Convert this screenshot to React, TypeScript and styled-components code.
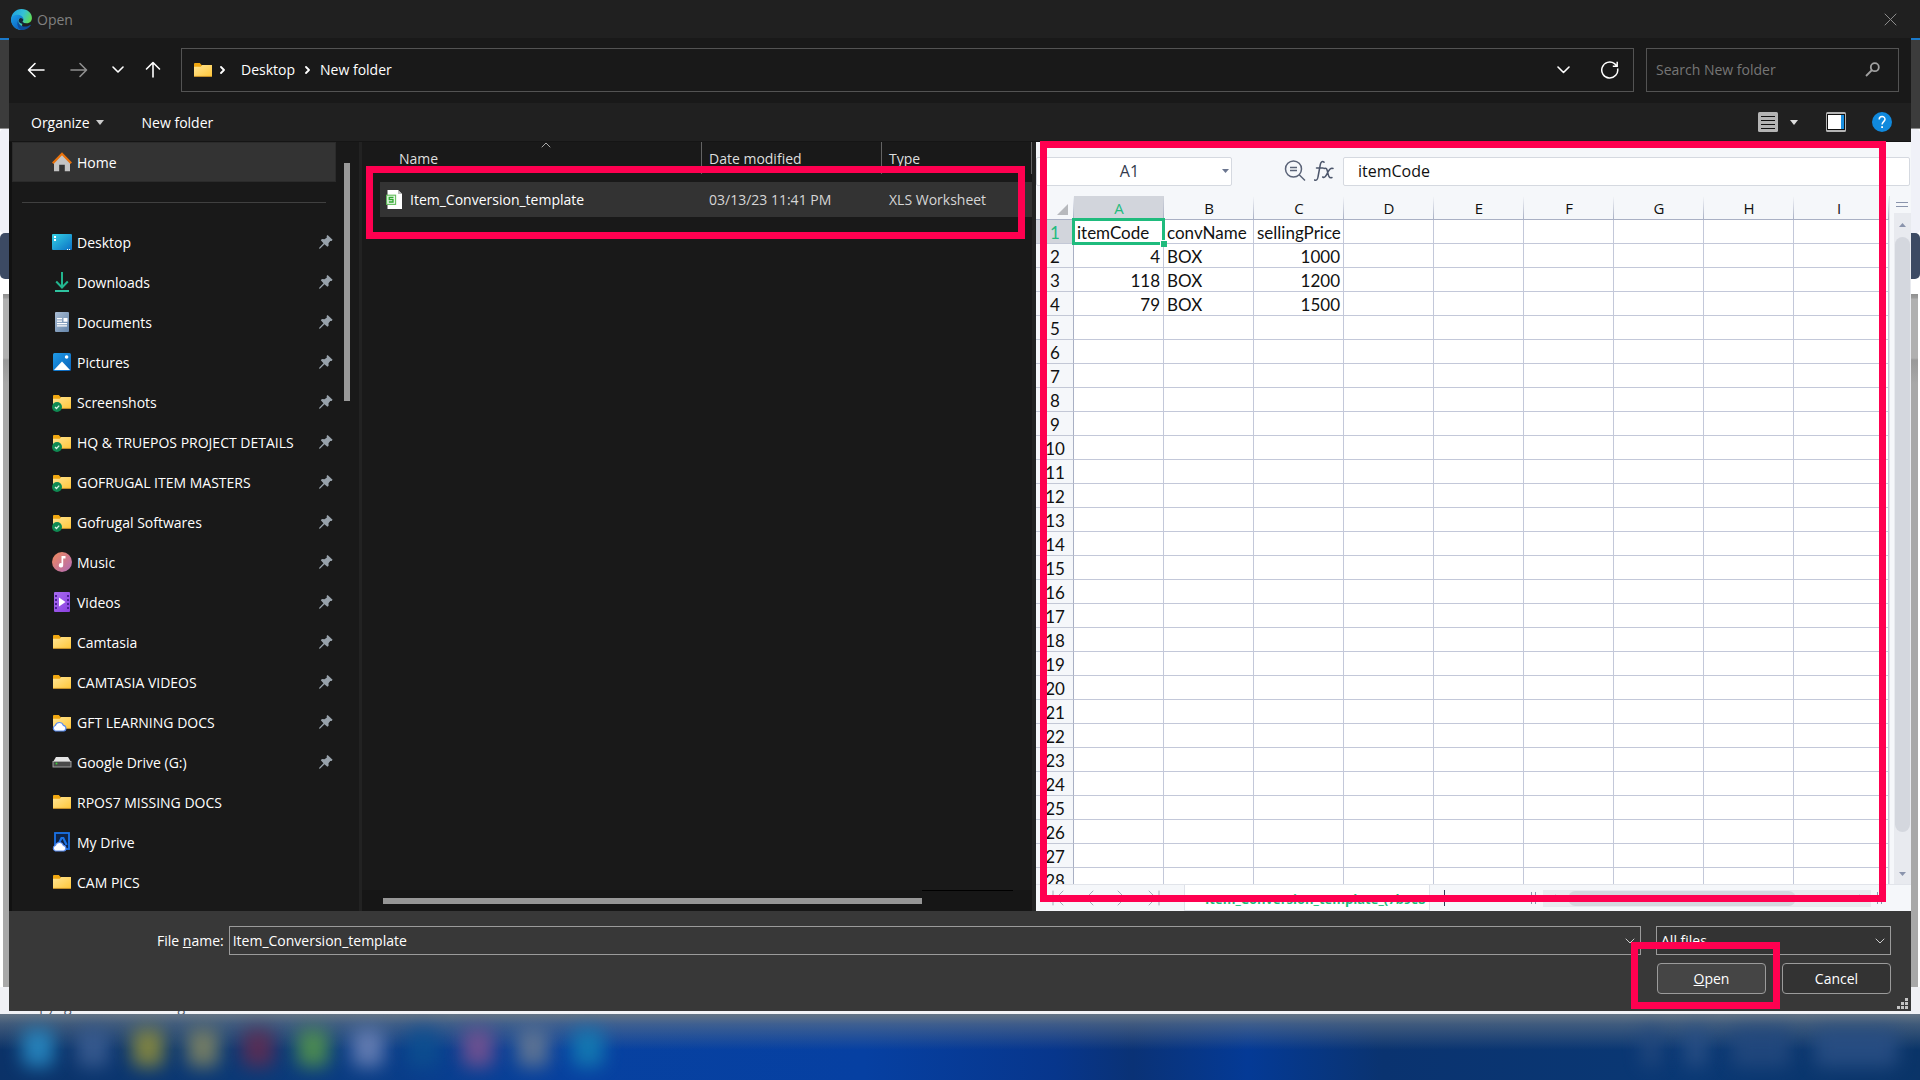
import React from "react";
import styled, { createGlobalStyle, css } from "styled-components";

const ui = `"Open Sans", "Noto Sans", sans-serif`;
const sheetFont = `Lato, "Noto Sans", sans-serif`;
const highlight = "#ff0050";

const GlobalStyle = createGlobalStyle`
  *, *::before, *::after { box-sizing: border-box; }
  body { margin: 0; background: #0a3674; font-family: ${ui}; font-size: 14px; color: #fff; overflow: hidden; }
  button, input, select { font: inherit; color: inherit; margin: 0; padding: 0; background: none; border: 0; border-radius: 0; outline: none; }
  svg { display: block; flex: none; }
  ul { list-style: none; margin: 0; padding: 0; }
`;

const Screen = styled.div`
  display: flex;
  flex-direction: column;
  height: 100vh;
`;

const TitleBar = styled.header`
  display: flex;
  align-items: center;
  flex: none;
  gap: 5px;
  height: 38px;
  padding: 0 20px 0 11px;
  background: #202020;
`;

const Title = styled.h1`
  flex: 1;
  margin: 0;
  font-size: 14px;
  font-weight: 400;
  color: #808080;
`;

const IconButton = styled.button<{ $w?: number }>`
  display: flex;
  align-items: center;
  justify-content: center;
  width: ${(p) => p.$w ?? 20}px;
  height: 24px;
  flex: none;
`;

const Middle = styled.div`
  display: flex;
  flex: 1;
  min-height: 0;
  background: #fff;
`;

const Edge = styled.div`
  display: flex;
  flex-direction: column;
  flex: none;
  width: 9px;
`;

const EdgeBlock = styled.div<{ $h?: number; $c: string; $r?: number; $right?: boolean }>`
  ${(p) => (p.$h ? `height: ${p.$h}px;` : "flex: 1;")}
  background: ${(p) => p.$c};
  border-radius: ${(p) => (p.$right ? `0 ${p.$r ?? 0}px ${p.$r ?? 0}px 0` : `${p.$r ?? 0}px 0 0 ${p.$r ?? 0}px`)};
`;

const EdgeShade = styled.div<{ $right?: boolean }>`
  flex: 1;
  ${(p) => (p.$right ? "margin-right: 2px;" : "margin-left: 3px;")}
  background: linear-gradient(#8f8f8f 0, #9c9c9c 4px, #b0b0b0 5px, #b0b0b0 64px, #999 66px, #a8a8a8 90px);
`;

const Dialog = styled.main`
  display: flex;
  flex-direction: column;
  flex: 1;
  min-width: 0;
  background: #191919;
`;

const NavBar = styled.nav`
  display: flex;
  align-items: center;
  flex: none;
  height: 65px;
  padding: 0 12px 2px 17px;
`;

const NavButtons = styled.div`
  display: flex;
  align-items: center;
  gap: 15px;
  margin-right: 14px;
`;

const AddressBar = styled.div`
  display: flex;
  align-items: center;
  flex: 1;
  height: 44px;
  padding: 0 11px;
  border: 1px solid #535353;
`;

const AddressActions = styled.div`
  display: flex;
  gap: 23px;
`;

const Crumb = styled.a`
  color: #fff;
  text-decoration: none;
  margin: 0 10px;
`;

const Spacer = styled.div`
  flex: 1;
`;

const SearchBox = styled.label`
  display: flex;
  align-items: center;
  width: 253px;
  height: 44px;
  margin-left: 12px;
  padding: 0 18px 0 9px;
  border: 1px solid #535353;
`;

const SearchInput = styled.input`
  flex: 1;
  min-width: 0;
  &::placeholder { color: #767676; opacity: 1; }
`;

const Toolbar = styled.div`
  display: flex;
  align-items: center;
  flex: none;
  height: 39px;
  padding: 0 9px 0 22px;
  background: #202020;
  border-bottom: 1px solid #151515;
`;

const ToolButton = styled.button`
  display: flex;
  align-items: center;
  gap: 6px;
  margin-right: 38px;
`;

const Panes = styled.div`
  display: grid;
  grid-template-columns: 353px minmax(0, 670fr) minmax(0, 879fr);
  grid-template-rows: minmax(0, 1fr);
  flex: 1;
  min-height: 0;
`;

const Sidebar = styled.aside`
  display: flex;
  border-left: 3px solid #111;
  border-right: 3px solid #222;
  overflow: hidden;
`;

const Places = styled.ul`
  width: 324px;
`;

const Place = styled.li<{ $active?: boolean }>`
  display: flex;
  align-items: center;
  gap: 5px;
  height: 40px;
  padding: 0 3px 0 40px;
  white-space: nowrap;
  ${(p) =>
    p.$active &&
    css`
      background: #333;
      box-shadow: inset 0 0 0 1px #2b2b2b;
    `}
`;

const PlaceLink = styled.a`
  flex: 1;
  color: #fff;
  text-decoration: none;
`;

const Divider = styled.li`
  height: 40px;
  padding: 20px 10px 0;
  &::before { content: ""; display: block; height: 1px; background: #404040; }
`;

const SideScroll = styled.div`
  width: 6px;
  height: 238px;
  margin: 21px 0 0 8px;
  background: #999;
`;

const Files = styled.section`
  position: relative;
  display: flex;
  flex-direction: column;
  min-width: 0;
`;

const FileTable = styled.table`
  width: 100%;
  table-layout: fixed;
  border-collapse: separate;
  border-spacing: 0;
`;

const FileHead = styled.th<{ $first?: boolean; $blank?: boolean }>`
  position: relative;
  height: 32px;
  padding: 0 0 0 ${(p) => (p.$first ? 19 : 7)}px;
  text-align: left;
  font-weight: 400;
  color: #dedede;
  ${(p) => !p.$blank && "border-right: 1px solid #636363;"}
`;

const SortMark = styled.span`
  position: absolute;
  top: 0;
  left: 50%;
`;

const FileCell = styled.td<{ $first?: boolean; $blank?: boolean }>`
  height: 35px;
  padding: 0 0 0 ${(p) => (p.$first ? 6 : 7)}px;
  background: ${(p) => (p.$blank ? "none" : "#333")};
  color: #d6d6d6;
  white-space: nowrap;
`;

const Gap = styled.tr`
  height: 8px;
`;

const FileName = styled.span`
  display: flex;
  align-items: center;
  gap: 8px;
  color: #fff;
`;

const ListScroll = styled.div`
  display: flex;
  align-items: flex-start;
  height: 21px;
  padding-left: 21px;
  background: #161616;
`;

const ListThumb = styled.div`
  width: 83%;
  height: 6px;
  margin-top: 8px;
  background: #969696;
`;

const ListTrack = styled.div`
  width: 91px;
  height: 1px;
  background: #000;
`;

const Marker = styled.div<{ $inset: string; $h?: number }>`
  position: absolute;
  inset: ${(p) => p.$inset};
  ${(p) => p.$h && `height: ${p.$h}px;`}
  border: 7px solid ${highlight};
  pointer-events: none;
  z-index: 3;
`;

const Preview = styled.section`
  position: relative;
  display: flex;
  flex-direction: column;
  min-width: 0;
  border-left: 4px solid #222;
  background: #f5f7fa;
  color: #111;
`;

const FormulaBar = styled.div`
  display: flex;
  align-items: center;
  flex: none;
  height: 54px;
  padding: 4px 1px 0 0;
  font-size: 16px;
`;

const NameBox = styled.button`
  display: flex;
  align-items: center;
  width: 196px;
  height: 29px;
  padding-right: 2px;
  background: #fff;
  border: 1px solid #d5d9e0;
  border-radius: 2px;
  color: #333b4e;
`;

const NameText = styled.span`
  flex: 1;
  text-align: center;
`;

const FormulaIcons = styled.div`
  display: flex;
  align-items: center;
  gap: 8px;
  margin: 0 9px 0 52px;
`;

const FormulaInput = styled.input`
  flex: 1;
  min-width: 0;
  height: 29px;
  padding: 0 14px;
  background: #fff;
  border: 1px solid #d5d9e0;
  border-radius: 2px;
`;

const GridArea = styled.div`
  display: flex;
  flex: 1;
  min-height: 0;
`;

const GridClip = styled.div`
  flex: 1;
  min-width: 0;
  overflow: hidden;
  background: #fff;
  border-right: 1px solid #dfe2e9;
`;

const Grid = styled.table`
  width: 100%;
  table-layout: fixed;
  border-collapse: separate;
  border-spacing: 0;
`;

const ColHead = styled.th<{ $on?: boolean }>`
  height: 24px;
  padding: 0;
  font-size: 15px;
  font-weight: 400;
  line-height: 20px;
  color: ${(p) => (p.$on ? "#1fbb7d" : "#111")};
  background: linear-gradient(#a9b0c400, #a9b0c4) right / 1px 100% no-repeat, ${(p) => (p.$on ? "#d2d5dc" : "#f5f7fa")};
  border-bottom: 1px solid #a9b0c4;
`;

const RowHead = styled.th<{ $on?: boolean }>`
  height: 24px;
  padding: 2px 0 0 1px;
  font: 400 17px/20px ${sheetFont};
  color: ${(p) => (p.$on ? "#1fbb7d" : "#111")};
  background: ${(p) => (p.$on ? "#d2d5dc" : "#f5f7fa")};
  border-right: 1px solid #a9b0c4;
  border-bottom: 1px solid #c3c8d6;
`;

const Cell = styled.td<{ $num?: boolean; $selected?: boolean }>`
  position: relative;
  height: 24px;
  padding: 2px 3px 0;
  font: 400 17px/20px ${sheetFont};
  text-align: ${(p) => (p.$num ? "right" : "left")};
  border-right: 1px solid #c3c8d9;
  border-bottom: 1px solid #c3c8d9;
  ${(p) =>
    p.$selected &&
    css`
      &::before { content: ""; position: absolute; inset: -2px; border: 3px solid #1fbb7d; z-index: 1; }
      &::after { content: ""; position: absolute; right: -4px; bottom: -4px; width: 7px; height: 7px; background: #1fbb7d; border: solid #fff; border-width: 1px 0 0 1px; z-index: 2; }
    `}
`;

const VScroll = styled.div`
  display: flex;
  flex-direction: column;
  width: 21px;
  padding: 0 0 0 4px;
`;

const SplitMark = styled.div`
  height: 5px;
  margin: 6px 3px 6px 2px;
  border: solid #8a94ac;
  border-width: 1px 0;
`;

const VTrack = styled.div`
  display: flex;
  flex-direction: column;
  align-items: center;
  flex: 1;
  padding: 10px 0 8px;
  background: #e8eaef;
`;

const VThumb = styled.div`
  width: 15px;
  flex: 1;
  margin: 10px 0 40px;
  border-radius: 8px;
  background: #d4d7de;
`;

const SheetTabs = styled.div`
  display: flex;
  flex: none;
  height: 27px;
  border-top: 1px solid #e1e4ea;
`;

const TabArrows = styled.div`
  display: flex;
  align-items: center;
  width: 148px;
  padding-left: 16px;
  gap: 20px;
`;

const SheetTab = styled.button`
  width: 246px;
  padding: 2px 0 0 20px;
  background: #fff;
  border: solid #dfe2e9;
  border-width: 0 1px 1px;
  font-size: 13px;
  font-weight: 700;
  color: #1fbb7d;
  white-space: nowrap;
  text-align: left;
`;

const TabTail = styled.div`
  display: flex;
  align-items: center;
  flex: 1;
  padding: 0 26px 0 14px;
`;

const Bar = styled.span<{ $h: number; $c: string }>`
  width: 1px;
  height: ${(p) => p.$h}px;
  margin-right: 3px;
  background: ${(p) => p.$c};
`;

const HTrack = styled.div`
  display: flex;
  align-items: center;
  width: 328px;
  height: 17px;
  margin: 0 6px 0 4px;
  padding: 0 7px 0 8px;
  background: #e8eaef;
`;

const HThumb = styled.div`
  width: 228px;
  height: 15px;
  margin-left: 12px;
  border-radius: 8px;
  background: #d4d7de;
`;

const Footer = styled.footer`
  position: relative;
  display: flex;
  flex-direction: column;
  flex: none;
  gap: 8px;
  height: 100px;
  padding: 15px 20px 0 148px;
  background: #383838;
`;

const FooterRow = styled.div`
  display: flex;
  align-items: center;
  justify-content: flex-end;
`;

const FieldLabel = styled.label`
  margin-right: 5px;
  white-space: nowrap;
`;

const Combo = styled.div<{ $fixed?: boolean }>`
  display: flex;
  align-items: center;
  ${(p) => (p.$fixed ? "width: 235px; margin-left: 15px; background: #333;" : "flex: 1;")}
  height: 29px;
  border: 1px solid #9b9b9b;
  position: relative;
  svg { position: absolute; right: 5px; pointer-events: none; }
`;

const ComboInput = styled.input`
  flex: 1;
  min-width: 0;
  padding: 0 24px 0 3px;
`;

const ComboSelect = styled.select`
  flex: 1;
  appearance: none;
  padding: 0 20px 0 4px;
`;

const OpenWrap = styled.div`
  position: relative;
  margin-right: 16px;
`;

const DialogButton = styled.button<{ $primary?: boolean }>`
  width: 109px;
  height: 31px;
  border: 1px solid #9b9b9b;
  border-radius: 4px;
  background: ${(p) => (p.$primary ? "#454545" : "#333")};
`;

const Grip = styled.div`
  position: absolute;
  right: 3px;
  bottom: 2px;
`;

const PageFoot = styled.div`
  flex: none;
  height: 3px;
  padding-left: 22px;
  overflow: hidden;
  background: #f0f1f5;
  color: #4a5568;
  font-size: 14px;
  span { display: block; margin-top: -15px; line-height: 20px; }
`;

const Taskbar = styled.div`
  display: flex;
  align-items: center;
  flex: none;
  gap: 23px;
  height: 66px;
  padding: 2px 22px 0;
  overflow: hidden;
  background:
    linear-gradient(#647485 0, #64748599 10px, #64748500 36px),
    linear-gradient(90deg, #0b3268 0, #0b3a78 14%, #0741a0 30%, #0640a2 45%, #07368c 55%, #0a3276 59%, #043a96 65%, #0a3370 72%, #0a3874 88%, #0a3468 100%);
`;

const Blob = styled.span<{ $c: string; $w?: number }>`
  width: ${(p) => p.$w ?? 32}px;
  height: 38px;
  border-radius: 8px;
  background: ${(p) => p.$c};
  filter: blur(9px);
  opacity: 0.85;
`;

type StrokeProps = { d: string; w?: number; h?: number; c?: string; s?: number };

const Stroke = ({ d, w = 16, h = 16, c = "#fff", s = 1.6 }: StrokeProps) => (
  <svg width={w} height={h} viewBox={`0 0 ${w} ${h}`} fill="none" stroke={c} strokeWidth={s} strokeLinecap="round" strokeLinejoin="round">
    <path d={d} />
  </svg>
);

const Triangle = ({ w = 8, h = 5, c = "#ccc", up = false }) => (
  <svg width={w} height={h} viewBox="0 0 8 5" preserveAspectRatio="none">
    <path d={up ? "M0 5h8L4 0z" : "M0 0h8L4 5z"} fill={c} />
  </svg>
);

const EdgeLogo = () => (
  <svg width="21" height="21" viewBox="0 0 24 24">
    <defs>
      <linearGradient id="lgA" x1="0" y1="0" x2="1" y2="0.5">
        <stop offset="0" stopColor="#1b9de2" />
        <stop offset=".55" stopColor="#35c1d6" />
        <stop offset="1" stopColor="#63e04b" />
      </linearGradient>
      <linearGradient id="lgB" x1="0" y1="0" x2="0.7" y2="1">
        <stop offset="0" stopColor="#1ca0e8" />
        <stop offset="1" stopColor="#0a5fc0" />
      </linearGradient>
    </defs>
    <path d="M12 23.900C5.500 23.900.3 18.700.1 12 .3 5 5.500.1 12 .1c7 0 11.900 4.700 11.900 10.100 0 3.800-2.900 6.200-6.300 6.200-3 0-4.400-1.100-4.400-1.900z" fill="url(#lgA)" />
    <path d="M.1 12C.2 9 3.400 6.700 7.500 6.700c4.400 0 7.200 3 6.700 5.900-.6-1.400-1.600-2.400-2.900-2.400-2 0-3.600 2-3.600 4.600 0 4 3.300 7.500 8 8-1 .5-2.500 1.100-4.200 1.100C5 23.800 0 18.500.1 12z" fill="url(#lgB)" />
    <path d="M8.300 12.500c-.2 5 4 8.200 9.200 7.400 2.200-.4 3.600-1.200 4.400-1.700.6-.4 1 0 .6.600-2 3-5.800 5.200-10.300 5.100C7.600 23 6 16 8.300 12.500z" fill="#0d4f9e" />
    <path d="M11.300 10.200c1.300 0 2.300 1 2.900 2.400-.3 1-1 1.500-1 1.900 0 .8 1.400 1.900 4.400 1.900-3 1.300-7.600.6-8.800-2.400-.3-2 .8-3.800 2.500-3.800z" fill="#14233a" />
  </svg>
);

const FolderShape = () => (
  <>
    <path d="M1 4.200C1 3.500 1.500 3 2.200 3h4.600l2 2.200H19V16H1z" fill="#f0a60f" />
    <path d="M1 6.800h6.800L9.300 5H19v11.300H1z" fill="url(#fold)" />
    <path d="M1 15.900h18v.9H1z" fill="#dfa02a" />
  </>
);

const Icon = ({ kind }: { kind: string }) => {
  const shapes: Record<string, React.ReactNode> = {
    home: (
      <>
        <path d="M2 10 10 2l8 8v9.300h-5.200v-6.600H7.200v6.600H2z" fill="#c3c3c3" />
        <path d="M.8 11.300 10 1.800l9.200 9.500" fill="none" stroke="#e8720c" strokeWidth="2.200" />
      </>
    ),
    desktop: (
      <>
        <rect x="0" y="2" width="20" height="16" rx="1" fill="url(#desk)" />
        <path d="M2 4h2v2H2zM2 7h2v2H2zM15 17h1v1h-1zM17 17h1v1h-1z" fill="#fff" />
      </>
    ),
    down: (
      <g fill="none" stroke="#22b58e" strokeWidth="2">
        <path d="M10 0v15.500M4.200 9.500 10 15.500l5.800-6" />
        <path d="M3 19h14" stroke="#2fc3a0" />
      </g>
    ),
    doc: (
      <>
        <rect x="3" y="0" width="14" height="20" rx="1" fill="url(#docg)" />
        <path d="M5 6h5v1.300H5zM5 8.500h5v1.300H5zM11.500 6h4v3.800h-4zM5 11h10v1.300H5zM5 13.300h10v1.300H5z" fill="#fff" />
      </>
    ),
    pic: (
      <>
        <rect x="1" y="1" width="18" height="18" rx="1.500" fill="url(#picg)" />
        <path d="m2 18 8-8.500L18 18z" fill="#fff" />
        <circle cx="14.600" cy="5" r="1.800" fill="#fff" />
      </>
    ),
    folder: <FolderShape />,
    synced: (
      <>
        <FolderShape />
        <circle cx="5" cy="15" r="5" fill="#0f8a53" />
        <path d="m3 15 1.500 1.500L7.200 13.600" fill="none" stroke="#d8f3e4" strokeWidth="1.300" />
      </>
    ),
    cloud: (
      <>
        <FolderShape />
        <path d="M3.300 19a2.900 2.900 0 0 1 0-5.500 4.200 4.200 0 0 1 8-.2 2.900 2.900 0 0 1 .4 5.700z" fill="#fff" stroke="#5b8def" strokeWidth="1.200" />
      </>
    ),
    music: (
      <>
        <circle cx="10" cy="10" r="10" fill="url(#musg)" />
        <path d="M9.500 4h4v2.600h-2.300v6.700a2.200 2.200 0 1 1-1.700-2.100z" fill="#fff" />
      </>
    ),
    video: (
      <>
        <rect x="2" y="0" width="16" height="20" rx="1" fill="url(#vidg)" />
        <path d="M3 3h2v2H3zM3 7h2v2H3zM3 11h2v2H3zM3 15h2v2H3zM15 3h2v2h-2zM15 7h2v2h-2zM15 11h2v2h-2zM15 15h2v2h-2z" fill="#4a1f96" />
        <path d="m7 5.500 6.500 4.500L7 14.500z" fill="#fff" />
      </>
    ),
    drive: (
      <>
        <path d="M4 5h12l3 5H1z" fill="#e4e4e4" />
        <rect x="1" y="9.500" width="18" height="5.500" fill="#4a4a4a" stroke="#aaa" strokeWidth=".9" />
        <circle cx="4.500" cy="11.600" r="1" fill="#3ad13a" />
      </>
    ),
    mydrive: (
      <>
        <rect x="3" y="1" width="14" height="16" fill="#0e2346" stroke="#1a73e8" strokeWidth="1.800" />
        <path d="M6 13 9.500 6h1.800l3.300 7" fill="none" stroke="#1a73e8" strokeWidth="2.200" />
        <path d="M3.300 19a2.900 2.900 0 0 1 0-5.500 4.200 4.200 0 0 1 8-.2 2.900 2.900 0 0 1 .4 5.700z" fill="#fff" stroke="#5b8def" strokeWidth="1.200" />
      </>
    ),
  };
  return (
    <svg width="20" height="20" viewBox="0 0 20 20" overflow="visible">
      {shapes[kind]}
    </svg>
  );
};

const gradient = (id: string, a: string, b: string) => (
  <linearGradient key={id} id={id} x1="0" y1="0" x2="1" y2="1">
    <stop offset="0" stopColor={a} />
    <stop offset="1" stopColor={b} />
  </linearGradient>
);

const DefsSvg = styled.svg`
  position: absolute;
`;

const Defs = () => (
  <DefsSvg width="0" height="0" aria-hidden="true">
    <defs>
      {gradient("fold", "#ffe596", "#ffc73a")}
      {gradient("desk", "#35d3e6", "#0b6fc4")}
      {gradient("docg", "#a9bcd3", "#6485aa")}
      {gradient("picg", "#1f9be8", "#0a62b8")}
      {gradient("musg", "#f08a5a", "#b06ab8")}
      {gradient("vidg", "#a86cf0", "#8a3fe0")}
    </defs>
  </DefsSvg>
);

const Pin = () => (
  <svg width="14" height="14" viewBox="0 0 14 14">
    <path d="M8.600 0 13.600 4.800 12.600 6 11.300 5.900 9.500 8.300 9.600 10.700 8.400 11.700 5.500 9.200 1.200 13.500 0 13.700.4 12.500 4.500 8.200 1.800 5.300 2.900 4.100 5.500 4.300 7.900 2.400 7.600 1z" fill="#98a2ab" />
  </svg>
);

const XlsIcon = () => (
  <svg width="16" height="19" viewBox="0 0 16 19">
    <path d="M1.500 0H12l4 4v15H1.500z" fill="#fff" />
    <path d="M12 0v4h4z" fill="#bbb" />
    <rect x=".6" y="5.200" width="9" height="9.200" fill="#e8f7e8" stroke="#63bd5c" strokeWidth="1.100" />
    <path d="M7.500 7.500H3.200v2.200H7V12H2.800" fill="none" stroke="#2ea82e" strokeWidth="1.300" />
  </svg>
);

const HelpIcon = () => (
  <svg width="20" height="20" viewBox="0 0 20 20">
    <circle cx="10" cy="10" r="10" fill="#1089dd" />
    <path d="M7.200 7.500c0-4 5.800-3.800 5.800-.3 0 2.300-2.900 2.600-2.900 5.300" fill="none" stroke="#fff" strokeWidth="1.500" />
    <rect x="9.200" y="14.200" width="1.800" height="1.800" fill="#fff" />
  </svg>
);

const places: [string, string, boolean][] = [
  ["desktop", "Desktop", true],
  ["down", "Downloads", true],
  ["doc", "Documents", true],
  ["pic", "Pictures", true],
  ["synced", "Screenshots", true],
  ["synced", "HQ & TRUEPOS PROJECT DETAILS", true],
  ["synced", "GOFRUGAL ITEM MASTERS", true],
  ["synced", "Gofrugal Softwares", true],
  ["music", "Music", true],
  ["video", "Videos", true],
  ["folder", "Camtasia", true],
  ["folder", "CAMTASIA VIDEOS", true],
  ["cloud", "GFT LEARNING DOCS", true],
  ["drive", "Google Drive (G:)", true],
  ["folder", "RPOS7 MISSING DOCS", false],
  ["mydrive", "My Drive", false],
  ["folder", "CAM PICS", false],
];

const columns = ["A", "B", "C", "D", "E", "F", "G", "H", "I"];
const sheet: (string | number)[][] = [
  ["itemCode", "convName", "sellingPrice"],
  [4, "BOX", 1000],
  [118, "BOX", 1200],
  [79, "BOX", 1500],
];

const appBlobs = ["#2a8fc8", "#3d5f93", "#92903a", "#858862", "#642c50", "#56984a", "#7085b8", "#0d5090", "#7d5390", "#6a7b92", "#1580b4"];

const WindowEdge = ({ right }: { right?: boolean }) => (
  <Edge>
    <EdgeBlock $h={2} $c="#1b7acb" />
    <EdgeBlock $h={88} $c="#3c3c3c" />
    <EdgeBlock $h={1} $c="#8c8c8c" />
    <EdgeBlock $h={104} $c="#f0f1f8" $r={4} $right={right} />
    <EdgeBlock $h={46} $c="#3c4a63" $r={5} $right={right} />
    <EdgeBlock $h={15} $c="#fff" />
    <EdgeShade $right={right} />
    <EdgeBlock $h={24} $c="#f0f1f5" />
  </Edge>
);

const FileList = () => (
  <Files>
    <FileTable>
      <colgroup>
        <col width="18" />
        <col />
        <col width="180" />
        <col width="150" />
      </colgroup>
      <thead>
        <tr>
          <FileHead $blank />
          <FileHead $first>
            Name
            <SortMark>
              <Stroke d="M1 5 5 1l4 4" w={10} h={6} c="#aaa" s={1} />
            </SortMark>
          </FileHead>
          <FileHead>Date modified</FileHead>
          <FileHead>Type</FileHead>
        </tr>
      </thead>
      <tbody>
        <Gap />
        <tr>
          <FileCell $blank />
          <FileCell $first>
            <FileName>
              <XlsIcon />
              Item_Conversion_template
            </FileName>
          </FileCell>
          <FileCell>03/13/23 11:41 PM</FileCell>
          <FileCell>XLS Worksheet</FileCell>
        </tr>
      </tbody>
    </FileTable>
    <Spacer />
    <ListScroll>
      <ListThumb />
      <ListTrack />
    </ListScroll>
    <Marker $inset="24px 7px auto 4px" $h={73} />
  </Files>
);

const SheetPreview = () => (
  <Preview>
    <FormulaBar>
      <NameBox>
        <NameText>A1</NameText>
        <Triangle w={7} h={4} c="#6b7690" />
      </NameBox>
      <FormulaIcons>
        <svg width="22" height="22" viewBox="0 0 22 22" fill="none" stroke="#5a6377" strokeWidth="1.500">
          <circle cx="9.500" cy="9" r="8" />
          <path d="M15.200 14.800 21 20.500M6 7.500h7M6 10.500h7" />
        </svg>
        <svg width="20" height="22" viewBox="0 0 20 22" fill="none" stroke="#4c566b" strokeWidth="1.500" strokeLinecap="round">
          <path d="M10 2.200C8.200.8 6.800 2 6.300 4.500L4 17c-.4 2.500-1.600 3.700-3.500 3M2.500 8h6.500M10 8.500c2.500-1.200 3 .8 3.500 3.200.8 3.500 1.500 7.300 4.500 5.800M19 8.500c-2-1-3.500.7-5 3.500-1.700 3.300-3 6.500-5.300 5" />
        </svg>
      </FormulaIcons>
      <FormulaInput aria-label="Formula" defaultValue="itemCode" />
    </FormulaBar>
    <GridArea>
      <GridClip>
        <Grid>
          <colgroup>
            <col width="38" />
            {columns.map((c) => (
              <col key={c} width="90" />
            ))}
            <col />
          </colgroup>
          <thead>
            <tr>
              <ColHead>
                <svg width="32" height="18" viewBox="0 0 32 18">
                  <path d="M32 5v11H21z" fill="#b7b9bd" />
                </svg>
              </ColHead>
              {columns.map((c, i) => (
                <ColHead key={c} $on={i === 0}>
                  {c}
                </ColHead>
              ))}
              <ColHead />
            </tr>
          </thead>
          <tbody>
            {Array.from({ length: 28 }, (_, r) => (
              <tr key={r}>
                <RowHead $on={r === 0}>{r + 1}</RowHead>
                {columns.map((c, i) => {
                  const value = sheet[r]?.[i];
                  return (
                    <Cell key={c} $num={typeof value === "number"} $selected={r === 0 && i === 0}>
                      {value}
                    </Cell>
                  );
                })}
                <Cell />
              </tr>
            ))}
          </tbody>
        </Grid>
      </GridClip>
      <VScroll>
        <SplitMark />
        <VTrack>
          <Triangle w={7} h={4} c="#8a94ac" up />
          <VThumb />
          <Triangle w={7} h={4} c="#8a94ac" />
        </VTrack>
      </VScroll>
    </GridArea>
    <SheetTabs>
      <TabArrows>
        <Stroke d="M1 1v14M11 1 4 8l7 7" w={12} c="#a5abb8" s={1} />
        <Stroke d="M9 1 2 8l7 7" w={12} c="#a5abb8" s={1} />
        <Stroke d="M2 1l7 7-7 7" w={12} c="#a5abb8" s={1} />
        <Stroke d="M1 1l7 7-7 7M11 1v14" w={12} c="#a5abb8" s={1} />
      </TabArrows>
      <SheetTab>Item_Conversion_template_(7b9c8</SheetTab>
      <TabTail>
        <Bar $h={16} $c="#333b55" />
        <Spacer />
        <Bar $h={12} $c="#8a94ac" />
        <Bar $h={12} $c="#8a94ac" />
        <HTrack>
          <Stroke d="M4 1 1 4l3 3" w={5} h={8} c="#8a94ac" s={1} />
          <HThumb />
          <Spacer />
          <Stroke d="M1 1l3 3-3 3" w={5} h={8} c="#8a94ac" s={1} />
        </HTrack>
        <Bar $h={12} $c="#8a94ac" />
        <Bar $h={12} $c="#8a94ac" />
      </TabTail>
    </SheetTabs>
    <Marker $inset="-1px 25px 9px 4px" />
  </Preview>
);

export default function App() {
  return (
    <Screen>
      <GlobalStyle />
      <Defs />
      <TitleBar>
        <EdgeLogo />
        <Title>Open</Title>
        <IconButton aria-label="Close">
          <Stroke d="M1 1l11 11M12 1 1 12" w={13} h={13} c="#8c8c8c" s={1} />
        </IconButton>
      </TitleBar>
      <Middle>
        <WindowEdge />
        <Dialog>
          <NavBar>
            <NavButtons>
              <IconButton aria-label="Back">
                <Stroke d="M17 8H2M8 1.500 1.500 8 8 14.500" w={18} />
              </IconButton>
              <IconButton aria-label="Forward" $w={36}>
                <Stroke d="M1 8h15M10 1.500 16.500 8 10 14.500" w={18} c="#8f8f8f" />
              </IconButton>
              <IconButton aria-label="Recent locations" $w={12}>
                <Stroke d="M1 1l5 5 5-5" w={12} h={7} />
              </IconButton>
              <IconButton aria-label="Up" $w={28}>
                <Stroke d="M8 16V2M1.500 8 8 1.500 14.500 8" h={17} />
              </IconButton>
            </NavButtons>
            <AddressBar>
              <Icon kind="folder" />
              <IconButton aria-label="Root" $w={18}>
                <Stroke d="M1 1l3 3-3 3" w={5} h={8} s={1.8} />
              </IconButton>
              <Crumb href="#desktop">Desktop</Crumb>
              <Stroke d="M1 1l3 3-3 3" w={5} h={8} s={1.8} />
              <Crumb href="#new-folder">New folder</Crumb>
              <Spacer />
              <AddressActions>
                <IconButton aria-label="Previous locations" $w={24}>
                  <Stroke d="M1 1l5.500 5.500L12 1" w={13} h={8} />
                </IconButton>
                <IconButton aria-label="Refresh" $w={24}>
                  <svg width="18" height="18" viewBox="0 0 18 18" fill="none" stroke="#fff" strokeWidth="1.500">
                    <path d="M16.600 7.500A8 8 0 1 1 13.500 2.600L16 5M16.200.8V5.200H11.800" />
                  </svg>
                </IconButton>
              </AddressActions>
            </AddressBar>
            <SearchBox>
              <SearchInput aria-label="Search" placeholder="Search New folder" />
              <svg width="15" height="15" viewBox="0 0 15 15" fill="none" stroke="#a0a0a0" strokeWidth="1.800">
                <circle cx="9.800" cy="5.200" r="4" />
                <path d="M7 8 1 14" />
              </svg>
            </SearchBox>
          </NavBar>
          <Toolbar>
            <ToolButton>
              Organize <Triangle />
            </ToolButton>
            <ToolButton>New folder</ToolButton>
            <Spacer />
            <IconButton aria-label="View">
              <svg width="20" height="20" viewBox="0 0 20 20">
                <rect width="20" height="20" rx="1.500" fill="#b4b4b4" />
                <path d="M3 4.500h14M3 8.500h14M3 12.500h14M3 16.500h14" stroke="#111" strokeWidth="1" />
              </svg>
            </IconButton>
            <IconButton aria-label="View options" $w={32}>
              <Triangle c="#ddd" />
            </IconButton>
            <IconButton aria-label="Preview pane" $w={52}>
              <svg width="20" height="20" viewBox="0 0 20 20">
                <rect width="20" height="20" rx="1.500" fill="#b4b4b4" />
                <rect x="1.500" y="2.500" width="17" height="15" fill="#fff" stroke="#111" />
                <rect x="15" y="3" width="3" height="14" fill="#1a8fe0" />
              </svg>
            </IconButton>
            <IconButton aria-label="Help" $w={40}>
              <HelpIcon />
            </IconButton>
          </Toolbar>
          <Panes>
            <Sidebar>
              <Places>
                <Place $active>
                  <Icon kind="home" />
                  <PlaceLink href="#home">Home</PlaceLink>
                </Place>
                <Divider />
                {places.map(([kind, name, pinned]) => (
                  <Place key={name}>
                    <Icon kind={kind} />
                    <PlaceLink href="#place">{name}</PlaceLink>
                    {pinned && <Pin />}
                  </Place>
                ))}
              </Places>
              <SideScroll />
            </Sidebar>
            <FileList />
            <SheetPreview />
          </Panes>
          <Footer>
            <FooterRow>
              <FieldLabel htmlFor="file-name">
                File <u>n</u>ame:
              </FieldLabel>
              <Combo>
                <ComboInput id="file-name" defaultValue="Item_Conversion_template" />
                <Stroke d="M1 1l4 4 4-4" w={10} h={6} c="#ccc" s={1} />
              </Combo>
              <Combo $fixed>
                <ComboSelect aria-label="File type">
                  <option>All files</option>
                </ComboSelect>
                <Stroke d="M1 1l4 4 4-4" w={10} h={6} c="#ccc" s={1} />
              </Combo>
            </FooterRow>
            <FooterRow>
              <OpenWrap>
                <DialogButton $primary>
                  <u>O</u>pen
                </DialogButton>
                <Marker $inset="-21px -14px -15px -26px" />
              </OpenWrap>
              <DialogButton>Cancel</DialogButton>
            </FooterRow>
            <Grip>
              <svg width="11" height="11" viewBox="0 0 11 11" fill="#c4c4c4">
                <path d="M8 0h3v3H8zM8 4h3v3H8zM8 8h3v3H8zM4 4h3v3H4zM4 8h3v3H4zM0 8h3v3H0z" />
              </svg>
            </Grip>
          </Footer>
        </Dialog>
        <WindowEdge right />
      </Middle>
      <PageFoot>
        <span>Copyright © 2023 Gofrugal</span>
      </PageFoot>
      <Taskbar>
        {appBlobs.map((c) => (
          <Blob key={c} $c={c} />
        ))}
        <Spacer />
        <Blob $c="#24497e" $w={20} />
        <Blob $c="#2b5085" $w={24} />
        <Blob $c="#24497e" $w={60} />
        <Blob $c="#2b5085" $w={84} />
      </Taskbar>
    </Screen>
  );
}
